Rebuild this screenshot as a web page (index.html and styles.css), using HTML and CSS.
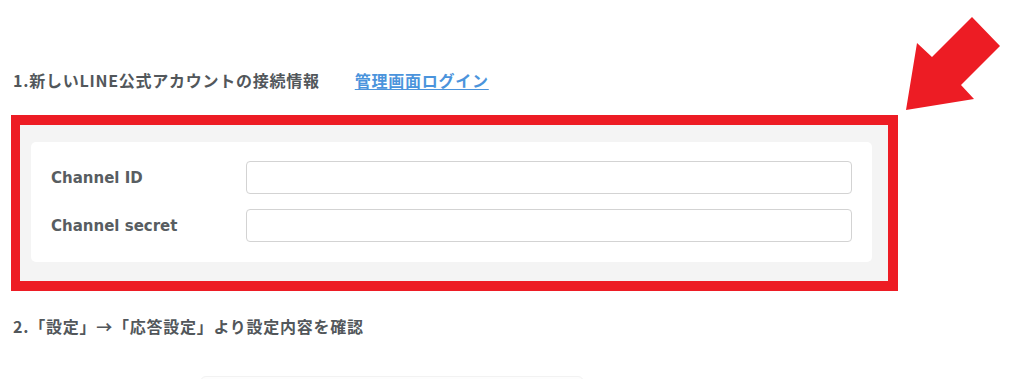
FILE: index.html
```html
<!DOCTYPE html>
<html lang="ja">
<head>
  <meta charset="UTF-8" />
  <meta name="viewport" content="width=device-width, initial-scale=1.0" />
  <title>LINE公式アカウント接続</title>
  <link rel="stylesheet" href="styles.css">
</head>
<body>
  <div class="page">
    <h2 class="step">1.新しいLINE公式アカウントの接続情報<a href="#" class="login">管理画面ログイン</a></h2>

    <div class="highlight">
      <div class="card">
        <div class="row">
          <label for="channelId">Channel ID</label>
          <input type="text" id="channelId">
        </div>
        <div class="row">
          <label for="channelSecret">Channel secret</label>
          <input type="text" id="channelSecret">
        </div>
      </div>
    </div>

    <h2 class="step step-2">2.「設定」→「応答設定」より設定内容を確認</h2>

    <div class="preview"></div>

    <!-- Pfeil oben rechts -->
    <svg class="arrow" width="1024" height="130" viewBox="0 0 1024 130">
      <polygon points="906,110 917,43 932,57 972,17 1000,46 961,85 974,99" fill="#ed1c24" />
    </svg>
  </div>
</body>
</html>
```

FILE: styles.css
```css
:root {
  --rot: #ed1c24;
  --grau: #f4f4f4;
  --text: #52575b;
  --link: #4b94dc;
  --rand: #d3d3d3;
}

* {
  box-sizing: border-box;
  margin: 0;
  padding: 0;
}

body {
  font-family: "Noto Sans CJK JP", "Noto Sans", sans-serif;
  background: #ffffff;
  color: var(--text);
  overflow: hidden;
}

.page {
  position: relative;
  padding-top: 68px;
  height: 379px;
  overflow: hidden;
}

.step {
  font-size: 16px;
  line-height: 24px;
  font-weight: bold;
  margin-left: 13px;
  letter-spacing: 0.75px;
}

.login {
  margin-left: 35px;
  color: var(--link);
  text-decoration: underline;
  text-underline-offset: 2px;
}

.highlight {
  margin: 23px 0 0 11px;
  width: 887px;
  height: 176px;
  border: 10px solid var(--rot);
  border-left-width: 9px;
  background: var(--grau);
  padding: 17px 16px 19px 11px;
}

.card {
  background: #ffffff;
  border-radius: 5px;
  padding: 19px 20px 20px 20px;
  display: flex;
  flex-direction: column;
  gap: 15px;
}

.row {
  display: flex;
  align-items: center;
}

.row label {
  width: 195px;
  font-family: "DejaVu Sans", sans-serif;
  font-size: 15px;
  font-weight: bold;
  color: #585d61;
}

.row input {
  flex: 1;
  height: 33px;
  border: 1px solid var(--rand);
  border-radius: 4px;
  background: #ffffff;
}

.step-2 {
  margin-top: 23px;
}

.preview {
  margin: 38px 0 0 200px;
  width: 384px;
  height: 20px;
  border: 1px solid #f2f2f2;
  border-radius: 6px;
  background: #fdfdfd;
}

.arrow {
  position: absolute;
  top: 0;
  left: 0;
}
```
